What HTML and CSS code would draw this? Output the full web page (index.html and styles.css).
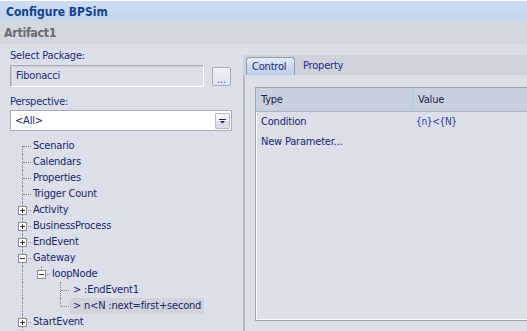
FILE: index.html
```html
<!DOCTYPE html>
<html>
<head>
<meta charset="utf-8">
<link rel="stylesheet" href="styles.css">
</head>
<body>
<div class="titlebar">Configure BPSim</div>
<div class="docbar">Artifact1</div>
<div class="main">
  <div class="left">
    <div class="label">Select Package:</div>
    <div class="pkgrow">
      <div class="pkg">Fibonacci</div>
      <div class="browse">...</div>
    </div>
    <div class="label label-gap">Perspective:</div>
    <div class="combo">
      <span class="combo-text">&lt;All&gt;</span>
      <span class="combo-btn"><svg width="7" height="5" viewBox="0 0 7 5"><path d="M0 0h7v1H0z M1 2h5L3.5 4.5z" fill="#1b2466"/></svg></span>
    </div>
    <ul class="tree">
      <li class="node"><span class="g F"></span><span class="t">Scenario</span></li>
      <li class="node"><span class="g T"></span><span class="t">Calendars</span></li>
      <li class="node"><span class="g T"></span><span class="t">Properties</span></li>
      <li class="node"><span class="g T"></span><span class="t">Trigger Count</span></li>
      <li class="node"><span class="g T"><span class="box plus"></span></span><span class="t">Activity</span></li>
      <li class="node"><span class="g T"><span class="box plus"></span></span><span class="t">BusinessProcess</span></li>
      <li class="node"><span class="g T"><span class="box plus"></span></span><span class="t">EndEvent</span></li>
      <li class="node"><span class="g T"><span class="box minus"></span></span><span class="t">Gateway</span></li>
      <li class="node"><span class="g I"></span><span class="g L"><span class="box minus"></span></span><span class="t">loopNode</span></li>
      <li class="node"><span class="g I"></span><span class="g"></span><span class="g T"></span><span class="t t2">&gt; :EndEvent1</span></li>
      <li class="node"><span class="g I"></span><span class="g"></span><span class="g L"></span><span class="t t2 sel">&gt; n&lt;N :next=first+second</span></li>
      <li class="node"><span class="g T"><span class="box plus"></span></span><span class="t">StartEvent</span></li>
    </ul>
  </div>
  <div class="right">
    <div class="tabs">
      <span class="tab active">Control</span>
      <span class="tab">Property</span>
    </div>
    <div class="page">
      <div class="grid">
        <div class="grow ghead">
          <div class="c1">Type</div>
          <div class="c2">Value</div>
        </div>
        <div class="grow">
          <div class="c1">Condition</div>
          <div class="c2 val">{n}&lt;{N}</div>
        </div>
        <div class="grow">
          <div class="c1">New Parameter...</div>
          <div class="c2"></div>
        </div>
      </div>
    </div>
  </div>
</div>
</body>
</html>
```
FILE: styles.css
```css
* { box-sizing: border-box; }
html, body {
  margin: 0;
  padding: 0;
}
body {
  width: 527px;
  height: 331px;
  overflow: hidden;
  background: #dadfe9;
  font-family: "DejaVu Sans Condensed", "DejaVu Sans", sans-serif;
  font-stretch: condensed;
  font-size: 11px;
  letter-spacing: -0.2px;
  color: #1a2468;
}
.titlebar {
  height: 21px;
  border-top: 1px solid #ffffff;
  background: linear-gradient(#cddcf1, #c3d4ec);
  color: #15428b;
  font-weight: bold;
  font-size: 12px;
  padding: 3px 0 0 6px;
  line-height: 17px;
  letter-spacing: 0;
}
.docbar {
  height: 23px;
  background: #d3d7e0;
  color: #6c6c6c;
  font-weight: bold;
  font-size: 12.5px;
  line-height: 23px;
  padding-left: 4px;
  letter-spacing: -0.4px;
}
.main {
  display: flex;
  height: 287px;
}
.left {
  width: 243px;
  flex: none;
  padding-top: 4px;
}
.label {
  height: 16px;
  line-height: 16px;
  margin-left: 10px;
  color: #1e2a6e;
}
.label-gap { margin-top: 7px; }
.pkgrow {
  display: flex;
  margin-top: 1px;
  margin-left: 10px;
}
.pkg {
  width: 194px;
  height: 22px;
  border: 1px solid #a7adb8;
  border-right-color: #ffffff;
  border-bottom-color: #ffffff;
  box-shadow: inset 1px 1px 0 #c6cbd4;
  line-height: 20px;
  padding-left: 5px;
  color: #1e2a6e;
}
.browse {
  width: 19px;
  height: 19px;
  margin: 2px 0 0 8px;
  border: 1px solid #a5acb9;
  border-radius: 2px;
  background: linear-gradient(#eef1f6, #dfe3eb);
  color: #2d3aa0;
  text-align: center;
  line-height: 24px;
  font-size: 10px;
  letter-spacing: 0;
  overflow: hidden;
}
.combo {
  display: flex;
  align-items: center;
  justify-content: space-between;
  width: 222px;
  height: 21px;
  margin-left: 10px;
  border: 1px solid #a7adb8;
  background: #ffffff;
  padding: 0 1px 0 4px;
}
.combo-text { color: #1a2468; }
.combo-btn {
  width: 15px;
  height: 16px;
  border: 1px solid #b6bcc7;
  border-radius: 1px;
  background: linear-gradient(#f3f5f9 0, #f3f5f9 45%, #d9dee8 55%, #d9dee8 100%);
  display: flex;
  align-items: center;
  justify-content: center;
  padding-top: 2px;
}
.tree {
  list-style: none;
  margin: 7px 0 0;
  padding: 0 0 0 12px;
}
.node {
  display: flex;
  height: 16px;
}
.g {
  width: 19px;
  flex: none;
  position: relative;
}
.g::before, .g::after {
  content: none;
  position: absolute;
}
.g.I::before, .g.T::before, .g.L::before, .g.F::before {
  content: "";
  left: 10px;
  width: 0;
  border-left: 1px dotted #858585;
}
.g.I::before, .g.T::before { top: 0; height: 16px; }
.g.L::before { top: 0; height: 8px; }
.g.F::before { top: 8px; height: 8px; }
.g.T::after, .g.L::after, .g.F::after {
  content: "";
  left: 11px;
  width: 8px;
  top: 8px;
  height: 0;
  border-top: 1px dotted #858585;
}
.box {
  position: absolute;
  left: 6px;
  top: 4px;
  width: 9px;
  height: 9px;
  border: 1px solid #8f8f8f;
  background: #ffffff;
  z-index: 1;
}
.box::before {
  content: "";
  position: absolute;
  left: 1px;
  top: 3px;
  width: 5px;
  height: 1px;
  background: #3a3a3a;
}
.box.plus::after {
  content: "";
  position: absolute;
  left: 3px;
  top: 1px;
  width: 1px;
  height: 5px;
  background: #3a3a3a;
}
.t {
  line-height: 16px;
  padding: 0 2px;
  white-space: nowrap;
  color: #1a2468;
}
.t2 {
  margin-left: 1px;
  padding: 0 3px;
}
.sel { background: #d0d3da; }
.right {
  flex: 1;
  display: flex;
  flex-direction: column;
  padding-top: 11px;
  min-width: 0;
}
.tabs {
  height: 20px;
  background: #cdd2dc;
  display: flex;
  align-items: flex-end;
  padding-left: 3px;
  flex: none;
}
.tab {
  height: 18px;
  line-height: 17px;
  padding: 0 7px 0 8px;
  color: #2a2a80;
}
.tab.active {
  border: 1px solid #8f9db3;
  border-bottom: none;
  border-radius: 3px 3px 0 0;
  background: linear-gradient(#e4ebf6, #c8d7ec 60%, #bccfe9);
  color: #1d2a70;
  padding: 0 5px 0 5px;
  width: 49px;
}
.page {
  flex: 1;
  border-left: 2px solid #b6bbc6;
  padding: 12px 0 10px 10px;
  display: flex;
  min-width: 0;
}
.grid {
  flex: 1;
  margin-right: -20px;
  border: 1px solid #a0a6b2;
  box-shadow: inset 1px -1px 0 #ffffff;
}
.grow {
  display: flex;
  height: 20px;
  line-height: 16px;
  padding-top: 2px;
}
.ghead {
  height: 24px;
  background: #c9d0dd;
  border-bottom: 1px solid #aab1bf;
  padding-top: 0;
  line-height: 24px;
  color: #1a1f4a;
}
.c1 {
  width: 156px;
  padding-left: 5px;
  flex: none;
}
.c2 { padding-left: 6px; }
.ghead .c2 {
  border-left: 1px solid #a9c9ec;
  padding-left: 5px;
  height: 23px;
}
.val {
  font-size: 10px;
  padding-left: 4px;
  color: #2a34a0;
  letter-spacing: -0.3px;
}
```
